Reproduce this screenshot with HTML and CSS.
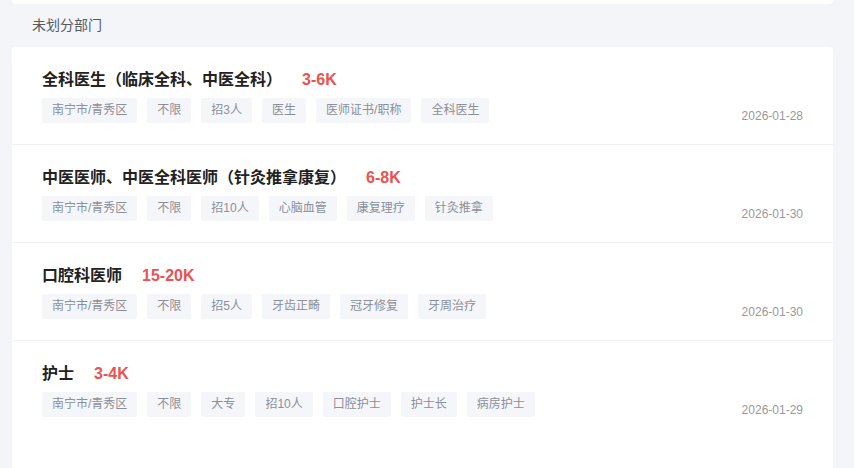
FILE: index.html
```html
<!DOCTYPE html>
<html lang="zh-CN">
<head>
<meta charset="utf-8">
<link rel="stylesheet" href="styles.css">
</head>
<body>
<div class="page">
  <div class="top-card"></div>
  <div class="dept">未划分部门</div>
  <div class="list">
    <div class="job">
      <div class="main">
        <div class="head"><span class="title">全科医生（临床全科、中医全科）</span><span class="salary">3-6K</span></div>
        <div class="tags">
          <span class="tag">南宁市/青秀区</span><span class="tag">不限</span><span class="tag">招3人</span><span class="tag">医生</span><span class="tag">医师证书/职称</span><span class="tag">全科医生</span>
        </div>
      </div>
      <div class="date">2026-01-28</div>
    </div>
    <div class="job">
      <div class="main">
        <div class="head"><span class="title">中医医师、中医全科医师（针灸推拿康复）</span><span class="salary">6-8K</span></div>
        <div class="tags">
          <span class="tag">南宁市/青秀区</span><span class="tag">不限</span><span class="tag">招10人</span><span class="tag">心脑血管</span><span class="tag">康复理疗</span><span class="tag">针灸推拿</span>
        </div>
      </div>
      <div class="date">2026-01-30</div>
    </div>
    <div class="job">
      <div class="main">
        <div class="head"><span class="title">口腔科医师</span><span class="salary">15-20K</span></div>
        <div class="tags">
          <span class="tag">南宁市/青秀区</span><span class="tag">不限</span><span class="tag">招5人</span><span class="tag">牙齿正畸</span><span class="tag">冠牙修复</span><span class="tag">牙周治疗</span>
        </div>
      </div>
      <div class="date">2026-01-30</div>
    </div>
    <div class="job">
      <div class="main">
        <div class="head"><span class="title">护士</span><span class="salary">3-4K</span></div>
        <div class="tags">
          <span class="tag">南宁市/青秀区</span><span class="tag">不限</span><span class="tag">大专</span><span class="tag">招10人</span><span class="tag">口腔护士</span><span class="tag">护士长</span><span class="tag">病房护士</span>
        </div>
      </div>
      <div class="date">2026-01-29</div>
    </div>
  </div>
</div>
</body>
</html>
```

FILE: styles.css
```css
* { box-sizing: border-box; }
html, body {
  margin: 0;
  padding: 0;
  background: #f4f5f9;
  font-family: "Liberation Sans", "Noto Sans CJK SC", sans-serif;
  overflow: hidden;
}
.page {
  margin: 0 21px 0 12px;
  display: flex;
  flex-direction: column;
}
.top-card {
  height: 4px;
  background: #ffffff;
  border-radius: 0 0 4px 4px;
}
.dept {
  height: 43px;
  padding-left: 20px;
  padding-bottom: 4px;
  display: flex;
  align-items: center;
  font-size: 14px;
  color: #555a62;
}
.list {
  background: #ffffff;
  border-radius: 4px 4px 0 0;
  min-height: 430px;
}
.job {
  display: flex;
  justify-content: space-between;
  padding: 21px 30px 21px 30px;
  border-bottom: 1px solid #f0f1f4;
}
.job:last-child { border-bottom: none; }
.main {
  display: flex;
  flex-direction: column;
  gap: 6px;
}
.head {
  display: flex;
  align-items: center;
  gap: 20px;
  height: 24px;
}
.title {
  font-size: 16px;
  font-weight: 700;
  color: #222;
  line-height: 24px;
}
.salary {
  font-size: 16px;
  font-weight: 700;
  color: #ea5350;
  line-height: 24px;
}
.tags {
  display: flex;
  gap: 10px;
}
.tag {
  height: 25px;
  line-height: 25px;
  padding: 0 10px;
  font-size: 12px;
  color: #8b8f99;
  background: #f5f6fa;
  border-radius: 2px;
}
.date {
  align-self: flex-end;
  font-size: 12px;
  line-height: 16px;
  color: #999;
  margin-bottom: -1px;
}
```
